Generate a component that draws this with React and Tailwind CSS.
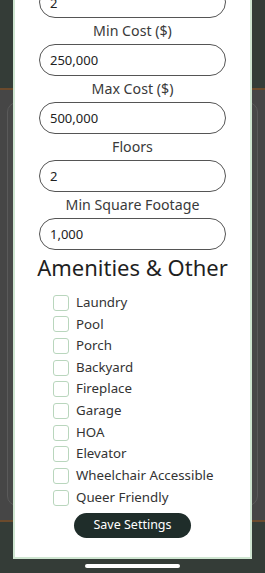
import { useState } from 'react';

const fields = [
  { label: 'Min Cost ($)', value: '250,000' },
  { label: 'Max Cost ($)', value: '500,000' },
  { label: 'Floors', value: '2' },
  { label: 'Min Square Footage', value: '1,000' },
];

const amenities = [
  'Laundry',
  'Pool',
  'Porch',
  'Backyard',
  'Fireplace',
  'Garage',
  'HOA',
  'Elevator',
  'Wheelchair Accessible',
  'Queer Friendly',
];

export default function App() {
  const [checked, setChecked] = useState({});

  const toggle = (name) => {
    setChecked((prev) => ({ ...prev, [name]: !prev[name] }));
  };

  return (
    <div
      className="relative h-[573px] w-[265px] overflow-hidden bg-[#343c37]"
      style={{ fontFamily: '"Noto Sans", "Open Sans", sans-serif' }}
    >
      {/* Dimmed page behind the modal */}
      <div className="flex h-full flex-col">
        <div className="h-[88px] shrink-0" />
        <div className="h-[2px] shrink-0 bg-[#6b4a2c]" />
        <div className="h-[430px] shrink-0 bg-[#464646] px-[7px] pt-[12px] pb-[14px]">
          <div className="h-full rounded-[10px] border border-[#5a5a5a] bg-[#484848]" />
        </div>
        <div className="h-[2px] shrink-0 bg-[#6b4a2c]" />
      </div>

      {/* Settings modal (scrolled) */}
      <div className="absolute left-[13px] top-0 flex h-[559px] w-[239px] flex-col items-center overflow-hidden border-x-2 border-b-2 border-[#cfe6d1] bg-white">
        <div className="-mt-[14px] flex h-[32px] w-[187px] shrink-0 items-end rounded-full border border-[#555] px-[10px] pb-[6px] text-[13px] leading-[16px] text-[#222]">
          2
        </div>

        {fields.map((f) => (
          <div key={f.label} className="flex flex-col items-center">
            <p className="py-[3px] text-[14.2px] leading-[20px] text-[#3a3a3a]">{f.label}</p>
            <input
              defaultValue={f.value}
              className="h-[32px] w-[187px] rounded-full border border-[#555] px-[10px] text-[13px] text-[#222] outline-none"
            />
          </div>
        ))}

        <h2 className="mt-[3px] text-[22px] leading-[28px] text-[#1f1f1f]">Amenities &amp; Other</h2>

        <div className="mt-[11px] flex w-full flex-col pl-[38px]">
          {amenities.map((a) => (
            <label key={a} className="flex h-[21.67px] items-center gap-[7px]">
              <span
                onClick={() => toggle(a)}
                className={`h-[16px] w-[16px] rounded-[3px] border border-[#b9d6bd] ${checked[a] ? 'bg-[#1f2d2a]' : 'bg-white'}`}
              />
              <span className="text-[13.3px] text-[#333]">{a}</span>
            </label>
          ))}
        </div>

        <button className="mt-[4px] h-[25px] w-[117px] rounded-full bg-[#1f2d2a] text-[12.5px] text-white">
          Save Settings
        </button>
      </div>

      {/* Home indicator */}
      <div className="absolute bottom-[5px] left-[85px] h-[4px] w-[95px] rounded-full bg-white" />
    </div>
  );
}
